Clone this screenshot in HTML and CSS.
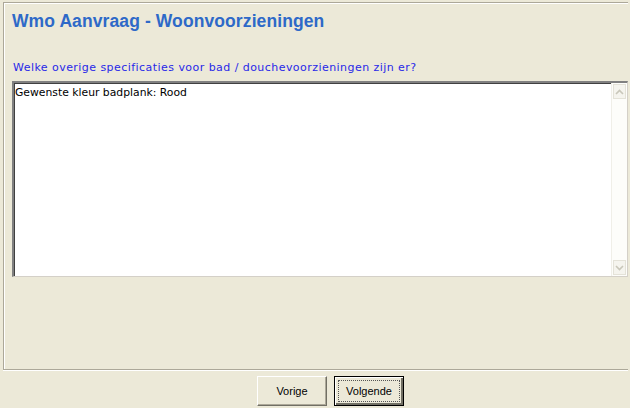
FILE: index.html
```html
<!DOCTYPE html>
<html lang="nl">
<head>
    <meta charset="UTF-8">
    <title>Wmo Aanvraag - Woonvoorzieningen</title>
    <link rel="stylesheet" href="styles.css">
</head>
<body>
    <div class="panel">
        <h1>Wmo Aanvraag - Woonvoorzieningen</h1>
        <p class="question">Welke overige specificaties voor bad / douchevoorzieningen zijn er?</p>
        <div class="memo">
            <div class="memo-text">Gewenste kleur badplank: Rood</div>
            <div class="scrollbar">
                <div class="arrow">
                    <svg width="9" height="6" viewBox="0 0 9 6"><path d="M1 5 L4.5 1.5 L8 5" fill="none" stroke="#c9c7ba" stroke-width="1.6"/></svg>
                </div>
                <div class="track"></div>
                <div class="arrow">
                    <svg width="9" height="6" viewBox="0 0 9 6"><path d="M1 1 L4.5 4.5 L8 1" fill="none" stroke="#c9c7ba" stroke-width="1.6"/></svg>
                </div>
            </div>
        </div>
    </div>
    <div class="buttons">
        <button class="btn">Vorige</button>
        <button class="btn btn-default"><span>Volgende</span></button>
    </div>
</body>
</html>
```

FILE: styles.css
```css
* {
    margin: 0;
    padding: 0;
    box-sizing: border-box;
}

body {
    width: 630px;
    height: 408px;
    background: #ece9d8;
    font-family: Tahoma, "DejaVu Sans", sans-serif;
    overflow: hidden;
}

.panel {
    margin: 2px 2px 0 3px;
    height: 368px;
    border-top: 1px solid #aca899;
    border-left: 1px solid #aca899;
    border-bottom: 1px solid #aca899;
    box-shadow: inset 1px 1px 0 #fff, 0 1px 0 #fff;
    padding: 0 0 0 8px;
}

h1 {
    font-family: "Liberation Sans", Arial, sans-serif;
    font-size: 17.5px;
    font-weight: bold;
    color: #2e69c8;
    padding-top: 8px;
    line-height: 20px;
    letter-spacing: 0.1px;
}

.question {
    margin-top: 30px;
    font-family: "DejaVu Sans", sans-serif;
    font-size: 11px;
    letter-spacing: 0.45px;
    color: #2828e8;
    line-height: 14px;
    padding-left: 1px;
}

.memo {
    margin-top: 6px;
    height: 196px;
    display: flex;
    background: #fff;
    border-top: 2px solid #808080;
    border-left: 2px solid #808080;
    border-right: 1px solid #d4d0c8;
    border-bottom: 1px solid #d4d0c8;
    box-shadow: inset 1px 1px 0 #404040;
}

.memo-text {
    flex: 1;
    font-family: "DejaVu Sans", sans-serif;
    font-size: 10.8px;
    color: #000;
    padding: 3px 2px 3px 1px;
    line-height: 13px;
}

.scrollbar {
    width: 16px;
    display: flex;
    flex-direction: column;
    background: #fdfdfa;
    border-left: 1px solid #f0efe8;
    padding: 1px 0;
}

.track {
    flex: 1;
}

.arrow {
    height: 15px;
    margin: 0 1px;
    border: 1px solid #e4e2d8;
    background: #f5f4ee;
    display: flex;
    align-items: center;
    justify-content: center;
}

.buttons {
    display: flex;
    justify-content: center;
    gap: 7px;
    padding-top: 6px;
    padding-left: 31px;
}

.btn {
    width: 70px;
    height: 30px;
    font-family: "Liberation Sans", Arial, sans-serif;
    font-size: 11px;
    color: #000;
    background: #ece9d8;
    border: 1px solid;
    border-color: #fff #716f64 #716f64 #fff;
    box-shadow: inset -1px -1px 0 #aca899;
}

.btn-default {
    border: 1px solid #000;
    box-shadow: inset 1px 1px 0 #fff, inset -2px -2px 0 #716f64;
    padding: 3px;
}

.btn-default span {
    display: block;
    height: 100%;
    line-height: 20px;
    border: 1px dotted #555;
}
```
